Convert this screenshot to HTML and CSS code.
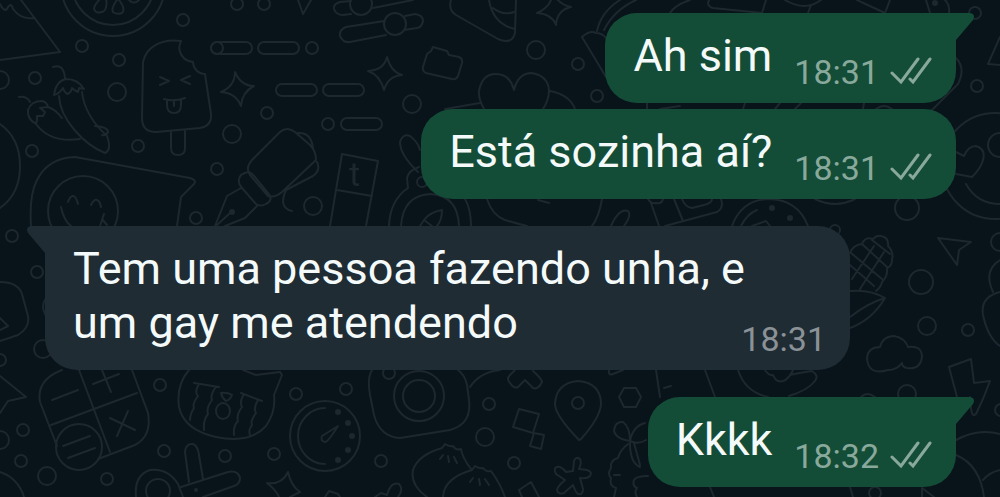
FILE: index.html
```html
<!DOCTYPE html>
<html lang="pt-BR">
<head>
    <meta charset="UTF-8">
    <meta name="viewport" content="width=device-width, initial-scale=1.0">
    <title>Conversa</title>
    <link rel="stylesheet" href="styles.css">
</head>
<body>
    <svg class="wallpaper" viewBox="0 0 1000 497" preserveAspectRatio="xMidYMid slice" aria-hidden="true">
        <!-- pizza, lemon -->
        <path d="M21 0L60 52L0 60M0 4q5 10 8 3q3-5 5 2q8 11 21 9"/>
        <circle cx="113" cy="-16" r="52"/>
        <circle cx="113" cy="-16" r="41"/>
        <path d="M101 -2q-7 7-7 11q2 5 8 3q6-2 4-14M117 0q-6 8-4 12q4 3 9 1q4-4-3-13M129 0q5 5 10 0"/>
        <!-- chillies -->
        <path d="M53 67q11-4 12 12M54 95q2-14 12-16q12 0 18 10l-5-1-1 4q-4-2-6-4q-1 5-5 6q-3-2-4-6q-4 6-9 7M59 96C60 120 85 145 105 153Q112 150 107 136C95 125 84 110 82 92"/>
        <path d="M19 97q8-1 11 5M36 124q-9-5-8-14q3-9 14-9q5 1 6 6l-8 1 5 4-2 4-6 0 0 4zM36 124C45 136 60 142 80 139M48 107Q55 109 62 118M95 126q13 1 13 6q-2 4-6 3"/>
        <!-- ice lolly -->
        <path d="M181 41C160 38 146 48 143 62L142 118Q142 132 156 132L200 128Q212 126 211 114L205 74C198 74 193 68 193 62C183 61 176 51 181 41zM171 132v16q0 7 7 7t7-7v-17"/>
        <path d="M160 77l9 4-9 4M190 76l-9 4 9 4M164 99q10 3 21-1M167 100v5q0 8 7 8t7-8v-6M174 101v5"/>
        <!-- sticker face -->
        <path d="M0 124q20 14 20 42q0 28-20 42M31 226Q29 195 37 180Q48 158 75 157L190 178Q197 180 194 184L181 197L177 226"/>
        <circle cx="83" cy="211" r="35"/>
        <path d="M68 202q2-6 5-6t5 8M91 205q3-6 6-5t4 7M61 207q3 14 10 19M104 214l-4 12m2-7l5 6"/>
        <!-- sliders, dashes, stars -->
        <path d="M298 0l5 14 8-14M351 1L340 2Q333 4 334 9Q336 15 343 15L351 14M373 8L413 0M384 21L346 27Q339 30 340 36Q343 43 350 42L386 35M405 16L415 14Q423 15 423 21Q422 27 417 28L404 30"/>
        <circle cx="361" cy="4" r="11"/>
        <circle cx="395" cy="24" r="11"/>
        <rect x="211" y="42" width="41" height="12" rx="6"/>
        <rect x="258" y="42" width="41" height="12" rx="6"/>
        <rect x="276" y="84" width="41" height="12" rx="6"/>
        <rect x="323" y="84" width="41" height="12" rx="6"/>
        <rect x="341" y="118" width="41" height="12" rx="6"/>
        <path d="M235 72Q241 86 254 86Q242 92 241 106Q236 93 221 92Q235 86 235 72zM387 57Q391 72 402 75Q388 76 384 90Q380 75 368 71Q384 70 387 57zM553-6Q560 5 571 7Q557 10 556 25Q552 14 537 13Q550 8 553-6z"/>
        <!-- fountain pen -->
        <path d="M280 132Q287 126 295 132L310 145Q316 151 316 160L282 192Q275 198 268 196L250 175Q245 168 252 160zM241 175q8-6 13 1l14 17q6 7-2 11q-5 3-10 0l-14-16q-6-7-1-13zM241 188L227 196L215 226M257 206L245 218L225 226M216 226L230 213M298 133q13-1 15 15M317 162q4 8-4 14L286 190q-8 18 6 21"/>
        <circle class="dot" cx="232" cy="212" r="3"/>
        <path d="M330 226L342 154L378 161L366 226M337 190l35 6"/>
        <text x="349" y="186">t</text>
        <path d="M418 172Q400 155 400 142Q403 133 410 136Q418 142 420 150M389 226Q390 200 408 188l-1-10q2-8 12-11M401 226Q403 195 431 194Q458 196 459 226M465 199q6 10 6 27M420 226L424 220Q430 212 442 210Q442 220 437 226M424 220l8 6"/>
        <circle cx="422" cy="182" r="5"/>
        <!-- cheese, camera, heart, cone -->
        <path d="M451 0Q448 10 456 15L498 39Q512 45 515 33L516 0M489 0Q493 24 515 29M493 8q10 8 21 4M433 47l14 4 2 4 10 2q4 2 3 6l-4 13q-2 4-6 3l-26-6q-4-2-3-6l4-13 4-3z"/>
        <path d="M484 109Q478 98 479 91Q482 74 496 74Q510 74 514 90Q518 73 532 73Q548 76 549 90Q549 100 543 109M550 91Q570 95 575 109M445 109L480 103M606 77L582 37Q590 30 596 33Q602 33 606 38M597 31Q601 12 620 0"/>
        <path d="M487 199Q492 215 505 220Q515 223 527 226M538 200l11 3M602 199q-3 18-10 27M611 226q8-18 17-15q4 4-4 15"/>
        <!-- between the outgoing bubbles -->
        <path d="M604 30q10-20 32-30M670 13Q675 5 690 0M709 0q-3 6 4 8l49 5 4-13M785 0q20 12 36 0M808 13l3-8M857 0l28 13 5-13M926 0l4 13M945 0q5 5 4 13M1000 37L988 64L1000 65M956 58q10 10 2 26q-12 12-26 26M647 103v6M660 109l20-3M745 103l-2 6M775 109l5-6M795 109l6-6M864 103l-1 6M876 109q8-6 16 0"/>
        <circle class="dot" cx="935" cy="3" r="3"/>
        <circle cx="995" cy="166" r="53"/>
        <circle cx="1000" cy="145" r="12"/>
        <path d="M966 184Q977 204 1000 204M956 152l8 4q4-10 12-10q10 3 7 14q-2 8-11 17l-16-3"/>
        <path d="M648 199q3 5 8 4q6 1 7-4M651 203l8 23M665 226L717 212Q724 208 721 199M674 199l9 22M682 199q3 8 10 9l12-3q8-2 8-6M732 226Q742 199 770 199Q798 200 808 226M741 226q6-12 16-16M752 226l14-5 4 5M815 199q20 10 40 0"/>
        <circle class="dot" cx="772" cy="208" r="3"/>
        <circle class="dot" cx="790" cy="218" r="3"/>
        <!-- corn -->
        <path d="M850 253q3-8 12-9q3-8 11-5q4-4 8-3q8 1 7 10q6 6 4 14q0 6-5 8q1 8-5 14q-1 5-6 9M850 265l24 21M851 253l31 26M862 244l25 23M872 240l18 14M852 279l22-33M860 289l24-37M850 291Q870 289 885 298Q872 320 850 328M885 298Q868 303 850 317"/>
        <!-- arrow, avocado, cloud, bolt -->
        <path d="M938 238l33 4-12 8-2 15zM993 292Q983 270 1000 260M1000 292Q980 297 983 315Q988 338 1000 346M880 347Q883 336 894 336Q905 338 908 347Q922 345 922 357Q920 370 907 368Q902 367 902 363Q897 370 888 370Q868 376 867 358Q868 347 880 347zM957 397L949 367L971 359L974 383L990 381Q984 398 976 414Q972 418 971 408L970 397M861 397q6-6 14 0"/>
        <path d="M738 370Q745 392 768 397M765 370q4 6 8 5q3 8 10 6q6-2 10-11M790 375q8-2 22-4q8 5 2 11q-6 8-25 14M656 370l4 27M664 388l7-2M705 370l10 27M956 440Q978 428 1000 434M956 455Q980 465 984 497M983 480Q990 472 1000 470M922 488l12 9M922 488v9M710 487l4 10M850 487l3 10"/>
        <!-- left edge, calculator -->
        <path d="M0 282Q18 282 22 294L28 316Q30 328 18 335L0 341M0 318l8 8-8 4M0 376L26 397L8 401L0 413M0 472Q18 478 24 497M46 298q-6 8 0 18"/>
        <path d="M62 370Q36 380 40 402L57 446M132 370L148 413Q152 436 135 445L98 459M79 370l31 82M51 425L137 393M52 400l26-10M93 384l26-10M102 370l9 22M110 418l25 12M128 411l-11 25M63 446l27-10M68 458l27-10"/>
        <circle cx="79" cy="447" r="23"/>
        <!-- scissors, jar, timer -->
        <path d="M136 497Q134 475 150 470Q168 468 178 484L183 497M189 482L185 452Q186 443 193 444Q198 446 199 455L203 479M181 487L228 472Q238 470 240 478Q240 484 234 486L203 497"/>
        <circle cx="158" cy="491" r="12"/>
        <circle class="dot" cx="196" cy="490" r="2"/>
        <path d="M189 370Q176 385 179 407Q184 430 216 437Q250 444 266 426Q276 412 274 395L282 375L280 372M243 370l13 5 24-3M194 383l25 4M199 384q-5 8-1 12q-6 8-4 12q-4 6-4 12M215 388q-5 8-3 12q-6 8-4 14q-5 6-4 16M241 393l21 8M244 394q-5 8-2 13q-6 8-4 14q-5 5-4 14M258 400q-5 8-2 13q-6 8-4 12q-4 5-2 10M221 393q6-1 11 2q-2 5-6 6q-4-3-5-8z"/>
        <ellipse cx="223" cy="411" rx="7" ry="8"/>
        <circle cx="325" cy="436" r="35"/>
        <path d="M325 408A27 28 0 0 0 325 464M338 426L322 436Q320 441 325 442Q328 442 338 426z"/>
        <circle class="dot" cx="338" cy="412" r="3"/>
        <circle class="dot" cx="348" cy="423" r="3"/>
        <circle class="dot" cx="352" cy="436" r="3"/>
        <circle class="dot" cx="348" cy="450" r="3"/>
        <circle class="dot" cx="338" cy="460" r="3"/>
        <path d="M279 497Q276 490 267 483Q282 485 288 472Q291 486 300 492L290 497M325 497l4-6 9 3 2 3M375 497l6-4 6 2q4-14 12-11q5 5-1 13"/>
        <!-- camera, tiles, pin -->
        <path d="M372 370Q367 378 370 395L374 415Q380 437 400 438L450 430Q472 424 469 400L467 385Q465 375 458 370M470 387Q480 372 500 370M515 370l-5 5q-4 4 0 8q4 6 8 4l7-7 8 8q5 2 9-6q0-3-9-11M609 370q-1 6 4 4l10-4"/>
        <circle cx="419" cy="396" r="25"/>
        <circle cx="419" cy="396" r="16"/>
        <path d="M519 409l20 5-6 19-20-6zM534 433l10 2-3 14-11-3zM579 440Q555 415 555 404Q556 383 578 381Q601 383 601 404Q600 418 581 439zM624 388h12l5 9-5 10h-12l-5-10z"/>
        <!-- dumplings, asterisk, flower -->
        <path d="M427 497Q410 485 413 470Q418 455 442 448l3-4q4 3 8 2q3 5 8 3q1 8 10 20M443 497Q444 478 472 470l3-4q4 3 8 2q3 4 8 3q9 12 14 26M443 455l-3 4M448 456l1 6M454 457l3 6M473 478l-3 4M479 479l1 6M485 479l4 6M519 490l12-8 8 15M519 490l3 7"/>
        <path d="M573 471l1-10q2-5 6-2q2 3-1 10l8 1q6 2 3 6q-3 3-10 2l3 11q0 6-5 5q-2-1-5-9l-9 8q-6 2-7-3q0-3 8-10l-9-6q-3-6 1-7q4-1 9 5z"/>
        <path d="M630 441q-14-2-16-10q1-10 9-9q7 5 7 19q3-15 15-18M630 441q8 4 16-1M628 444q-8 6-10 14q-8 2-7 10q-4 6 0 10q-2 8 5 10l-2 9M614 475l6 0M630 443q0 20 10 24M634 443l6 22M648 476q-12 0-14 4q-2 6 3 8q-3 4 0 9"/>
        <!-- bubbles -->
        <g>
            <circle cx="82" cy="46" r="6"/><circle cx="119" cy="60" r="6"/><circle cx="35" cy="78" r="6"/>
            <circle cx="0" cy="80" r="9"/><circle cx="117" cy="92" r="9"/><circle cx="183" cy="20" r="6"/>
            <circle cx="217" cy="48" r="6"/><circle cx="138" cy="146" r="6"/><circle cx="32" cy="151" r="6"/>
            <circle cx="217" cy="169" r="6"/><circle cx="196" cy="218" r="6"/><circle cx="12" cy="236" r="6"/>
            <circle cx="237" cy="4" r="6"/><circle cx="264" cy="4" r="6"/><circle cx="312" cy="48" r="6"/>
            <circle cx="267" cy="113" r="6"/><circle cx="232" cy="134" r="9"/><circle cx="328" cy="124" r="6"/>
            <circle cx="412" cy="104" r="9"/><circle cx="313" cy="206" r="9"/><circle cx="536" cy="50" r="9"/>
            <circle cx="578" cy="64" r="6"/><circle cx="597" cy="96" r="6"/><circle cx="975" cy="13" r="6"/>
            <circle cx="977" cy="86" r="6"/><circle cx="907" cy="208" r="12"/><circle cx="921" cy="282" r="12"/>
            <circle cx="927" cy="326" r="9"/><circle cx="968" cy="330" r="6"/><circle cx="1000" cy="242" r="9"/>
            <circle cx="907" cy="394" r="9"/><circle cx="835" cy="230" r="5"/><circle cx="37" cy="272" r="6"/>
            <circle cx="43" cy="349" r="9"/><circle cx="0" cy="360" r="6"/><circle cx="23" cy="430" r="6"/>
            <circle cx="0" cy="440" r="9"/><circle cx="21" cy="461" r="6"/><circle cx="47" cy="476" r="9"/>
            <circle cx="107" cy="479" r="6"/><circle cx="160" cy="385" r="6"/><circle cx="164" cy="451" r="6"/>
            <circle cx="296" cy="394" r="6"/><circle cx="346" cy="389" r="6"/><circle cx="225" cy="456" r="6"/>
            <circle cx="274" cy="454" r="6"/><circle cx="381" cy="461" r="6"/><circle cx="389" cy="373" r="6"/>
            <circle cx="489" cy="404" r="6"/><circle cx="485" cy="437" r="9"/><circle cx="514" cy="463" r="6"/>
            <circle cx="578" cy="403" r="6"/><circle cx="875" cy="493" r="6"/><circle cx="1001" cy="410" r="6"/>
        </g>
    </svg>

    <main class="chat">
        <div class="message out first">
            <svg class="tail" viewBox="0 0 18 28" aria-hidden="true"><path d="M0 0H14Q20 1 17 7L0 27z"/></svg>
            <p class="text">Ah sim</p>
            <div class="meta">
                <time>18:31</time>
                <svg class="ticks" viewBox="0 0 42 28" role="img" aria-label="Entregue"><path d="M2 16L11 25L28 2M20 22L23 25L40 2"/></svg>
            </div>
        </div>
        <div class="message out">
            <p class="text">Está sozinha aí?</p>
            <div class="meta">
                <time>18:31</time>
                <svg class="ticks" viewBox="0 0 42 28" role="img" aria-label="Entregue"><path d="M2 16L11 25L28 2M20 22L23 25L40 2"/></svg>
            </div>
        </div>
        <div class="message in first">
            <svg class="tail" viewBox="0 0 18 28" aria-hidden="true"><path d="M18 0H4Q-2 1 1 7L18 27z"/></svg>
            <p class="text"><span>Tem uma pessoa fazendo unha, e</span><br><span>um gay me atendendo</span></p>
            <div class="meta">
                <time>18:31</time>
            </div>
        </div>
        <div class="message out first">
            <svg class="tail" viewBox="0 0 18 28" aria-hidden="true"><path d="M0 0H14Q20 1 17 7L0 27z"/></svg>
            <p class="text">Kkkk</p>
            <div class="meta">
                <time>18:32</time>
                <svg class="ticks" viewBox="0 0 42 28" role="img" aria-label="Entregue"><path d="M2 16L11 25L28 2M20 22L23 25L40 2"/></svg>
            </div>
        </div>
    </main>
</body>
</html>
```

FILE: styles.css
```css
* {
    box-sizing: border-box;
}
body {
    margin: 0;
    background-color: #09131a;
    color: #f4fafa;
    font-family: Roboto, "Liberation Sans", sans-serif;
}
.wallpaper {
    position: fixed;
    inset: 0;
    width: 100%;
    height: 100%;
    fill: none;
    stroke: #1d272e;
    stroke-width: 2;
    stroke-linecap: round;
    stroke-linejoin: round;
}
.wallpaper .dot {
    fill: #1d272e;
    stroke: none;
}
.wallpaper text {
    fill: #1d272e;
    stroke: none;
    font-size: 34px;
}
.chat {
    position: relative;
    display: flex;
    flex-direction: column;
    padding: 13px 44px 10px 45px;
}
.message {
    position: relative;
    margin-top: 6px;
    padding: 16px 24px 10px 28px;
    border-radius: 32px;
    font-size: 45px;
    line-height: 54px;
}
.message.first {
    margin-top: 27px;
}
.message:first-child {
    margin-top: 0;
}
.out {
    display: flex;
    align-items: flex-end;
    align-self: flex-end;
    gap: 22px;
    background-color: #144d37;
    fill: #144d37;
}
.out.first {
    border-top-right-radius: 0;
}
.in {
    display: flow-root;
    align-self: flex-start;
    width: 100%;
    max-width: 805px;
    background-color: #1f2c34;
    fill: #1f2c34;
}
.in.first {
    border-top-left-radius: 0;
}
.tail {
    position: absolute;
    top: 0;
    width: 18px;
    height: 28px;
}
.out .tail {
    left: 100%;
}
.in .tail {
    right: 100%;
}
.text {
    margin: 0;
    padding-bottom: 10px;
}
.meta {
    display: flex;
    align-items: center;
    gap: 11px;
    color: #89a99c;
    font-size: 34px;
    line-height: 42px;
}
/* the time floats beside the last line of a wrapped message */
.in .text {
    display: inline;
}
.in .meta {
    float: right;
    margin-top: 22px;
    color: #8b9297;
}
.ticks {
    width: 42px;
    height: 28px;
    margin-bottom: 2px;
    fill: none;
    stroke: #89a99c;
    stroke-width: 3;
    stroke-linecap: round;
}
```
